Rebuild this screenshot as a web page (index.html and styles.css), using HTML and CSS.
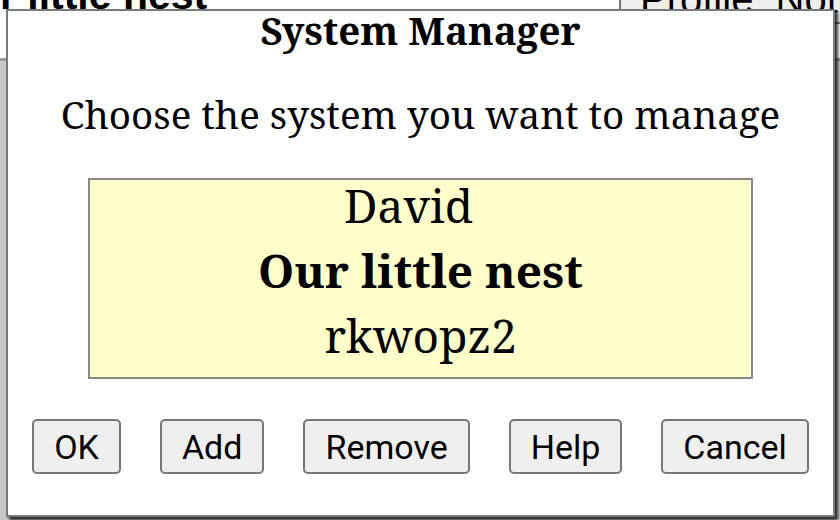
FILE: index.html
```html
<!DOCTYPE html>
<html>
<head>
<meta charset="utf-8">
<link rel="stylesheet" href="styles.css">
</head>
<body>
<div class="page">
  <header class="topbar">
    <h1 class="site-title">Our little nest</h1>
    <div class="top-actions">
      <button class="top-btn">Profile&nbsp; Notifications</button>
    </div>
  </header>
  <div class="content-area"></div>
</div>
<div class="dialog">
  <h2 class="dialog-title">System Manager</h2>
  <p class="dialog-prompt">Choose the system you want to manage</p>
  <div class="system-list">
    <div class="system-item">David&nbsp;&nbsp;</div>
    <div class="system-item selected">Our little nest</div>
    <div class="system-item">rkwopz2</div>
  </div>
  <div class="dialog-buttons">
    <button class="btn">OK</button>
    <button class="btn">Add</button>
    <button class="btn">Remove</button>
    <button class="btn">Help</button>
    <button class="btn">Cancel</button>
  </div>
</div>
</body>
</html>
```

FILE: styles.css
```css
html, body {
  margin: 0;
  padding: 0;
  width: 840px;
  height: 520px;
  overflow: hidden;
  background: #ffffff;
}

.page {
  display: flex;
  flex-direction: column;
  height: 520px;
}

.topbar {
  display: flex;
  justify-content: space-between;
  align-items: flex-start;
  height: 58px;
  border-bottom: 3px solid #999;
  background: #fff;
}

.site-title {
  margin: -27px 0 0 -57px;
  font-family: "Liberation Sans", Arial, sans-serif;
  font-weight: bold;
  font-size: 41px;
  line-height: 44px;
  color: #000;
  white-space: nowrap;
}

.top-actions {
  display: flex;
}

.top-btn {
  margin: -26px 0 0 0;
  padding: 0 0 0 19px;
  height: 50px;
  width: 221px;
  text-align: left;
  font-family: "Liberation Sans", Arial, sans-serif;
  font-size: 40px;
  line-height: 44px;
  color: #000;
  background: #eeeeee;
  border: 2px solid #777;
  border-right: none;
  white-space: nowrap;
  overflow: hidden;
}

.content-area {
  flex: 1;
  background: #c8c8c8;
}

.dialog {
  position: absolute;
  left: 6px;
  top: 9px;
  width: 825px;
  height: 504px;
  background: #fff;
  border: 2px solid #7a7a7a;
  box-shadow: 3px 3px 3px rgba(0, 0, 0, 0.8);
  display: flex;
  flex-direction: column;
  align-items: center;
  font-family: "Noto Serif", "Droid Serif", "DejaVu Serif", serif;
  color: #000;
}

.dialog-title {
  margin: -3px 0 0 0;
  font-size: 38.5px;
  line-height: 44px;
  font-weight: bold;
}

.dialog-prompt {
  margin: 38px 0 0 0;
  font-size: 38.5px;
  line-height: 48px;
}

.system-list {
  margin-top: 40px;
  width: 661px;
  height: 197px;
  background: #ffffcc;
  border: 2px solid #888;
  display: flex;
  flex-direction: column;
  align-items: center;
}

.system-item {
  font-size: 46px;
  line-height: 65px;
  white-space: pre;
}

.system-item:first-child {
  margin-top: -7px;
}

.system-item.selected {
  font-weight: bold;
}

.dialog-buttons {
  margin-top: 40px;
  display: flex;
  gap: 39px;
}

.btn {
  height: 55px;
  padding: 0 20px;
  font-family: Roboto, "Noto Sans", sans-serif;
  font-size: 34px;
  color: #000;
  background: #efefef;
  border: 2px solid #777;
  border-radius: 5px;
}
```
